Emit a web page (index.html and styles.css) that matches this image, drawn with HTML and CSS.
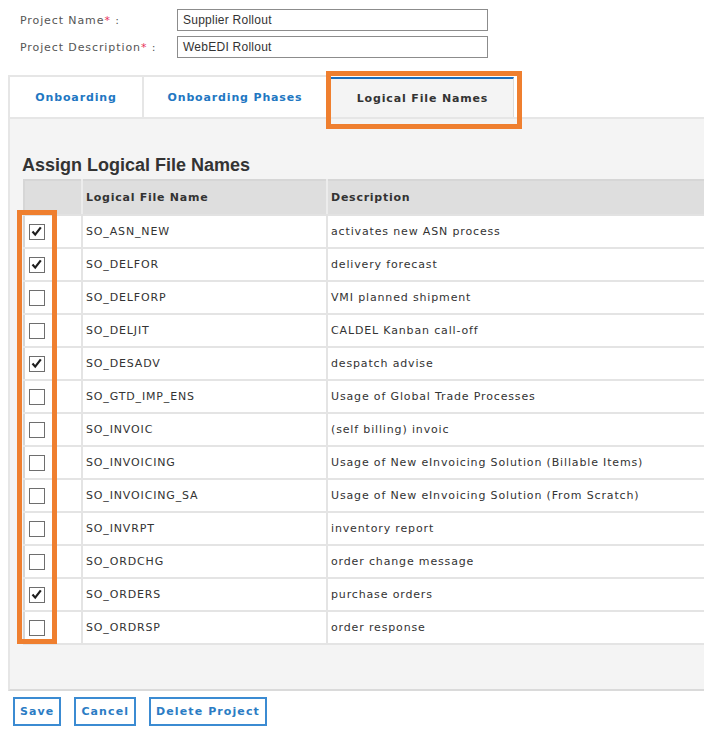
FILE: index.html
```html
<!DOCTYPE html>
<html>
<head>
<meta charset="utf-8">
<link rel="stylesheet" href="styles.css">
</head>
<body>
<div class="form">
  <div class="form-row">
    <label class="form-label">Project Name<span class="req">*</span> :</label>
    <div class="form-input">Supplier Rollout</div>
  </div>
  <div class="form-row">
    <label class="form-label">Project Description<span class="req">*</span> :</label>
    <div class="form-input">WebEDI Rollout</div>
  </div>
</div>

<div class="tabs">
  <div class="tab tab-1">Onboarding</div>
  <div class="tab tab-2">Onboarding Phases</div>
  <div class="tab tab-active">Logical File Names<span class="hl-tab"></span></div>
</div>

<div class="panel">
  <h2 class="panel-title">Assign Logical File Names</h2>
  <div class="table-wrap">
    <table class="grid">
      <thead>
        <tr><th class="c-check"></th><th class="c-name">Logical File Name</th><th class="c-desc">Description</th></tr>
      </thead>
      <tbody>
        <tr><td class="c-check"><span class="cb on"><svg viewBox="0 0 13 13"><path d="M2.5 6.5 L5.2 9.6 L10.8 2.4"/></svg></span></td><td>SO_ASN_NEW</td><td>activates new ASN process</td></tr>
        <tr><td class="c-check"><span class="cb on"><svg viewBox="0 0 13 13"><path d="M2.5 6.5 L5.2 9.6 L10.8 2.4"/></svg></span></td><td>SO_DELFOR</td><td>delivery forecast</td></tr>
        <tr><td class="c-check"><span class="cb"></span></td><td>SO_DELFORP</td><td>VMI planned shipment</td></tr>
        <tr><td class="c-check"><span class="cb"></span></td><td>SO_DELJIT</td><td>CALDEL Kanban call-off</td></tr>
        <tr><td class="c-check"><span class="cb on"><svg viewBox="0 0 13 13"><path d="M2.5 6.5 L5.2 9.6 L10.8 2.4"/></svg></span></td><td>SO_DESADV</td><td>despatch advise</td></tr>
        <tr><td class="c-check"><span class="cb"></span></td><td>SO_GTD_IMP_ENS</td><td>Usage of Global Trade Processes</td></tr>
        <tr><td class="c-check"><span class="cb"></span></td><td>SO_INVOIC</td><td>(self billing) invoic</td></tr>
        <tr><td class="c-check"><span class="cb"></span></td><td>SO_INVOICING</td><td>Usage of New eInvoicing Solution (Billable Items)</td></tr>
        <tr><td class="c-check"><span class="cb"></span></td><td>SO_INVOICING_SA</td><td>Usage of New eInvoicing Solution (From Scratch)</td></tr>
        <tr><td class="c-check"><span class="cb"></span></td><td>SO_INVRPT</td><td>inventory report</td></tr>
        <tr><td class="c-check"><span class="cb"></span></td><td>SO_ORDCHG</td><td>order change message</td></tr>
        <tr><td class="c-check"><span class="cb on"><svg viewBox="0 0 13 13"><path d="M2.5 6.5 L5.2 9.6 L10.8 2.4"/></svg></span></td><td>SO_ORDERS</td><td>purchase orders</td></tr>
        <tr><td class="c-check"><span class="cb"></span></td><td>SO_ORDRSP</td><td>order response</td></tr>
      </tbody>
    </table>
    <div class="hl-col"></div>
  </div>
</div>

<div class="buttons">
  <button class="btn">Save</button>
  <button class="btn">Cancel</button>
  <button class="btn">Delete Project</button>
</div>
</body>
</html>
```

FILE: styles.css
```css
html, body {
  margin: 0;
  padding: 0;
  background: #fff;
  overflow: hidden;
}
body {
  font-family: "DejaVu Sans", Verdana, sans-serif;
  font-size: 11px;
  color: #333;
}

/* form */
.form {
  padding: 9px 0 0 20px;
  display: flex;
  flex-direction: column;
  gap: 5px;
}
.form-row {
  display: flex;
  align-items: center;
  height: 22px;
}
.form-label {
  width: 157px;
  color: #555;
  font-size: 11px;
  letter-spacing: 0.9px;
}
.req { color: #e8335a; }
.form-input {
  box-sizing: border-box;
  width: 311px;
  height: 22px;
  border: 1px solid #8c8c8c;
  padding: 0 5px;
  display: flex;
  align-items: center;
  font-family: "Liberation Sans", Arial, sans-serif;
  font-size: 12px;
  letter-spacing: 0.25px;
  color: #333;
}

/* tabs */
.tabs {
  display: flex;
  margin: 17px 0 0 8px;
  height: 42px;
}
.tab {
  box-sizing: border-box;
  height: 42px;
  border-top: 2px solid #e6e6e6;
  border-left: 2px solid #e6e6e6;
  display: flex;
  align-items: center;
  justify-content: center;
  font-weight: bold;
  font-size: 11px;
  letter-spacing: 0.85px;
  color: #2277c2;
  background: #fff;
}
.tab-1 { width: 134px; }
.tab-2 { width: 184px; }
.tab-active {
  position: relative;
  width: 188px;
  margin-top: 2px;
  height: 40px;
  border-top: 2px solid #1b6fbf;
  border-left: none;
  border-right: 1px solid #dcdcdc;
  background: #f4f4f4;
  color: #333;
  padding-left: 6px;
}
.hl-tab {
  position: absolute;
  left: 0;
  top: -8px;
  width: 196px;
  height: 58px;
  box-sizing: border-box;
  border: 5px solid #ef7f2f;
}

/* panel */
.panel {
  background: #f4f4f4;
  margin-left: 8px;
  border-top: 2px solid #e6e6e6;
  border-left: 2px solid #e6e6e6;
  border-bottom: 2px solid #dadada;
  padding: 0 0 44px 13px;
}
.panel-title {
  margin: 36px 0 4px -1px;
  font-family: "Liberation Sans", Arial, sans-serif;
  font-size: 18px;
  line-height: 20px;
  font-weight: bold;
  color: #333;
}
.table-wrap {
  position: relative;
}
.grid {
  border-collapse: collapse;
  width: 100%;
  background: #fff;
  border-left: 2px solid #d6d6d6;
  border-top: 2px solid #d6d6d6;
}
.grid th {
  background: #dedede;
  height: 33px;
  text-align: left;
  font-weight: bold;
  font-size: 11px;
  letter-spacing: 0.75px;
  color: #333;
  padding: 0 0 0 3px;
  border-left: 2px solid #ececec;
  border-bottom: 2px solid #e2e2e2;
}
.grid td {
  height: 31px;
  padding: 0 0 0 3px;
  border-left: 2px solid #e4e4e4;
  border-bottom: 2px solid #e4e4e4;
  font-size: 11px;
  letter-spacing: 0.85px;
  color: #333;
  white-space: nowrap;
}
.grid th:first-child, .grid td:first-child { border-left: none; }
.grid .c-check { width: 58px; box-sizing: border-box; padding-left: 4px; }
.grid .c-name { width: 240px; }

.cb {
  display: block;
  box-sizing: border-box;
  width: 16px;
  height: 16px;
  border: 1.5px solid #6e6e6e;
  background: #fff;
}
.cb svg {
  display: block;
  width: 13px;
  height: 13px;
}
.cb svg path {
  fill: none;
  stroke: #1e1e1e;
  stroke-width: 2.2;
}
.hl-col {
  position: absolute;
  left: -6px;
  top: 31px;
  width: 40px;
  height: 434px;
  box-sizing: border-box;
  border: 5px solid #ef7f2f;
}

/* buttons */
.buttons {
  display: flex;
  gap: 13px;
  padding: 6px 0 0 13px;
}
.btn {
  height: 29px;
  box-sizing: border-box;
  border: 2px solid #3b8bd2;
  background: #fff;
  padding: 0 5px;
  font-family: "DejaVu Sans", Verdana, sans-serif;
  font-weight: bold;
  font-size: 11px;
  letter-spacing: 1.1px;
  color: #2b7cc4;
}
```
